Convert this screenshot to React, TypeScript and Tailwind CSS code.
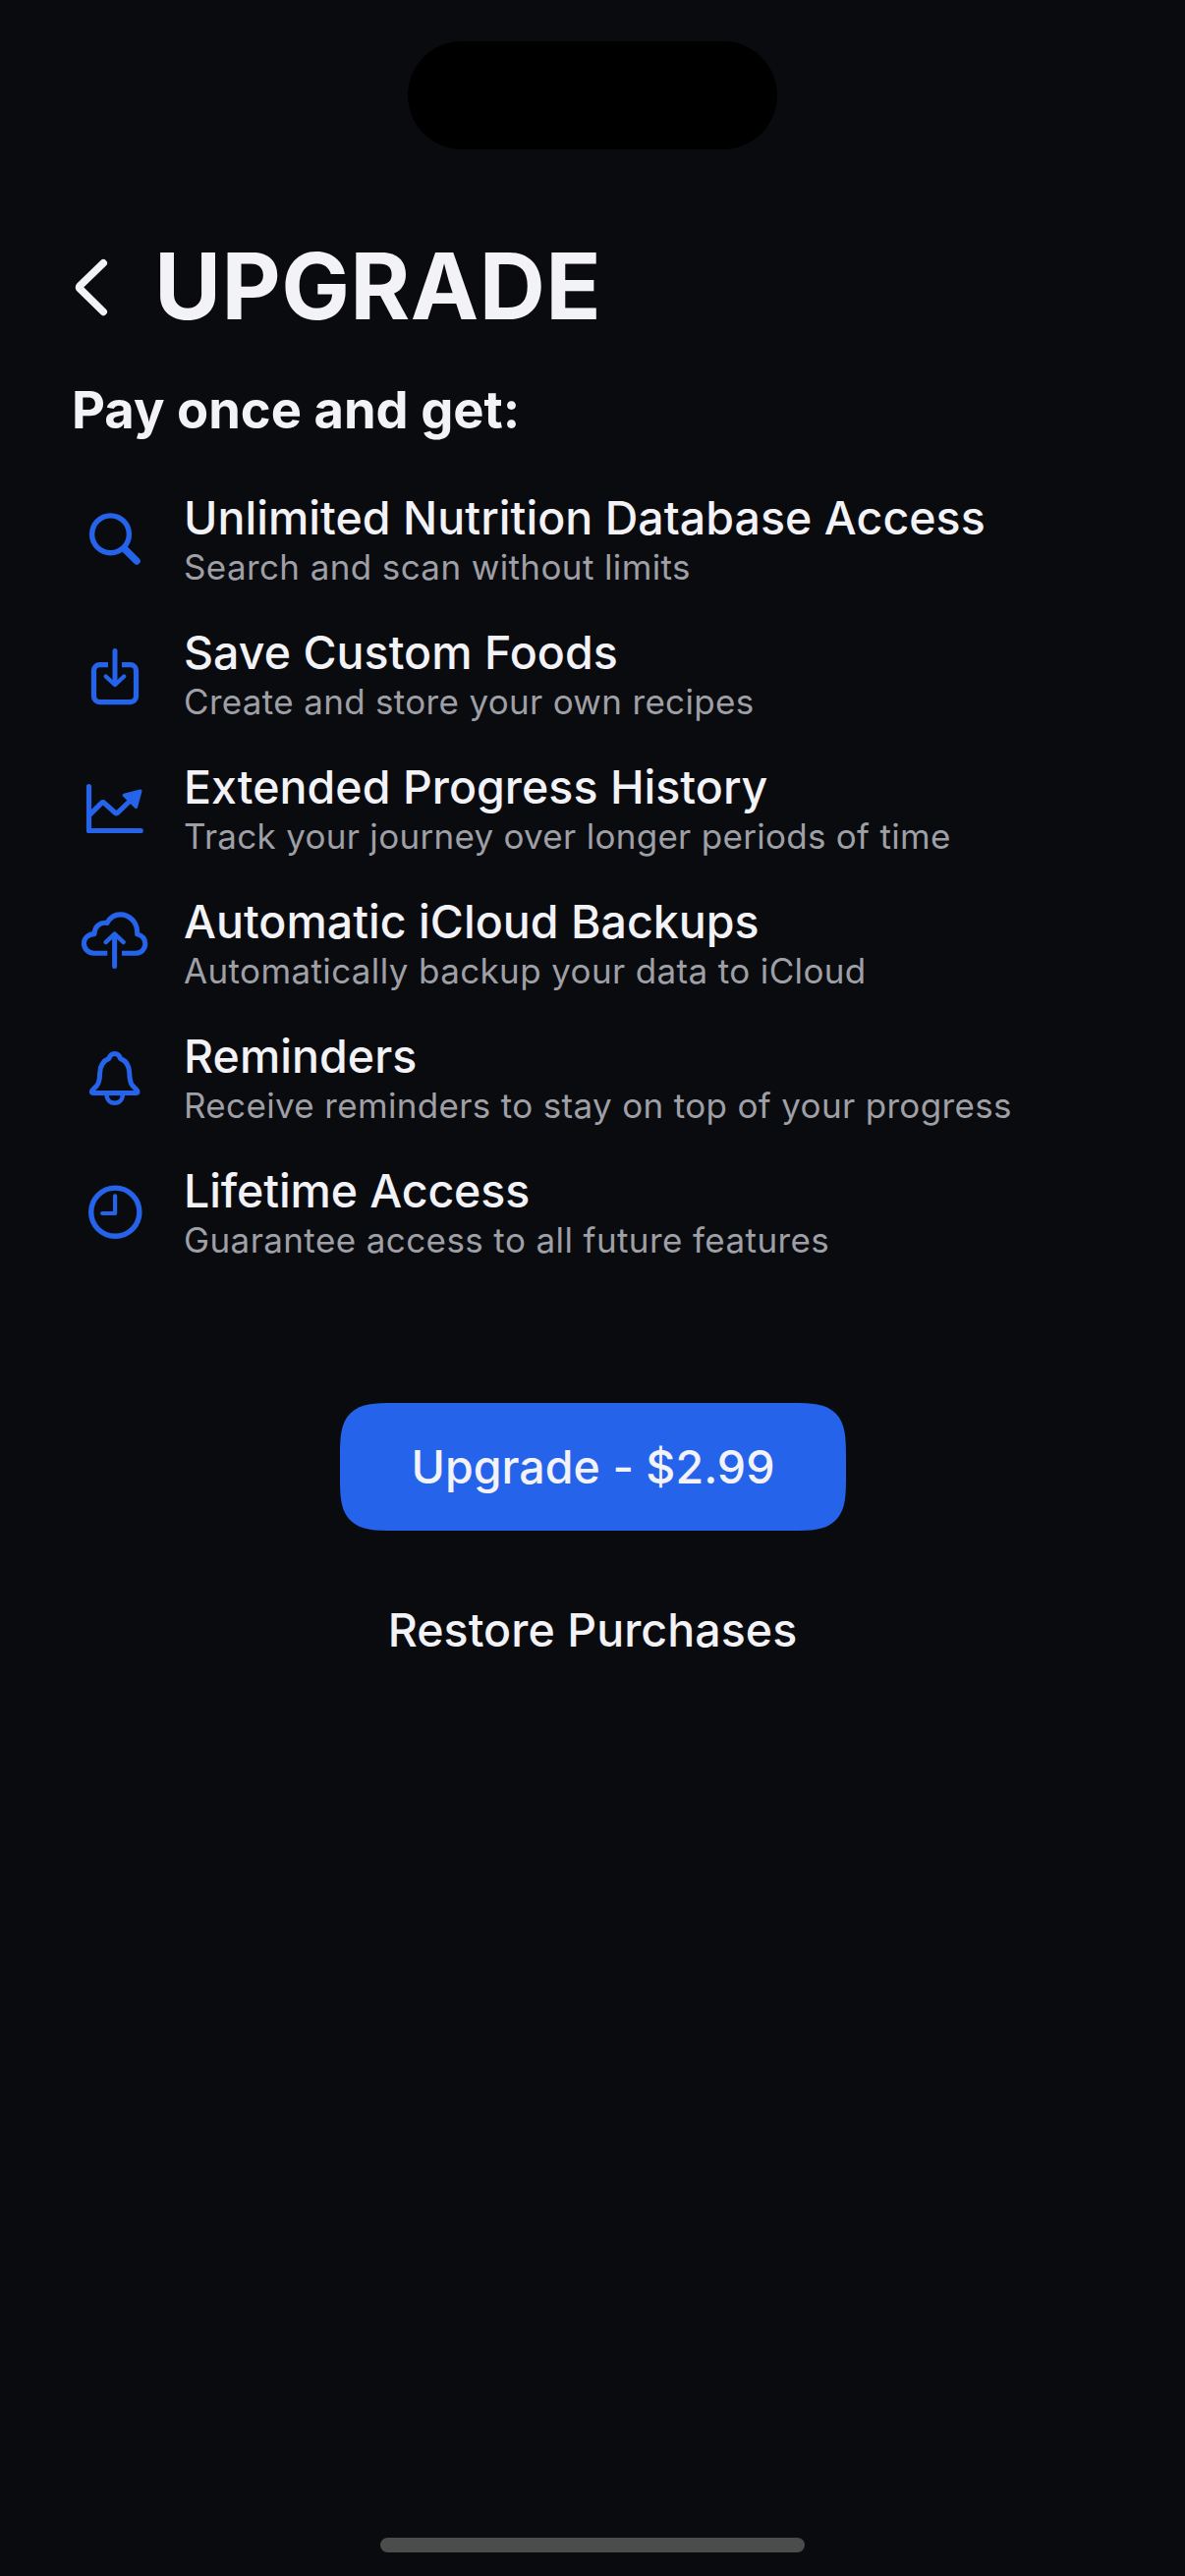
import type { ReactNode } from "react";

type Feature = {
  title: string;
  description: string;
  titleTracking: string;
  textTracking: string;
  icon: ReactNode;
};

const features: Feature[] = [
  {
    title: "Unlimited Nutrition Database Access",
    description: "Search and scan without limits",
    titleTracking: "tracking-[0.04px]",
    textTracking: "tracking-[0.38px]",
    icon: (
      <>
        <circle cx="36.5" cy="39.8" r="18.9" strokeWidth="5.4" />
        <path d="M51.2 55.1 63.1 67" strokeWidth="7.4" />
      </>
    ),
  },
  {
    title: "Save Custom Foods",
    description: "Create and store your own recipes",
    titleTracking: "tracking-[0.03px]",
    textTracking: "tracking-[0.32px]",
    icon: (
      <>
        <path
          d="M34 35.6H25.3A5.8 5.8 0 0 0 19.5 41.4V67.8A5.8 5.8 0 0 0 25.3 73.6H56.7A5.8 5.8 0 0 0 62.5 67.8V41.4A5.8 5.8 0 0 0 56.7 35.6H48"
          strokeWidth="5.2"
          strokeLinecap="butt"
        />
        <path d="M41 21.4V55" strokeWidth="5" />
        <path d="M31.7 47.5 41 56 50.2 47.5" strokeWidth="4.4" />
      </>
    ),
  },
  {
    title: "Extended Progress History",
    description: "Track your journey over longer periods of time",
    titleTracking: "tracking-[0.03px]",
    textTracking: "tracking-[0.29px]",
    icon: (
      <>
        <path d="M14.5 22.6V67.5H67.2" strokeWidth="5.2" />
        <path d="M15.5 51.1 27.3 39.4Q28.7 38 30.1 39.4L41.2 49.2Q42.6 50.4 44 49L58 35.5" strokeWidth="5.2" />
        <path d="M66.8 27.2 50.3 31.3 62.4 43.4Z" fill="currentColor" strokeWidth="3.4" />
      </>
    ),
  },
  {
    title: "Automatic iCloud Backups",
    description: "Automatically backup your data to iCloud",
    titleTracking: "tracking-[0.02px]",
    textTracking: "tracking-[0.37px]",
    icon: (
      <>
        <path
          d="M33.3 55.3H19.8C13.8 55.3 9.5 51 9.5 45.4 9.5 40 13.6 36 20 35.6 20.3 27.9 25.8 23.3 33 24.4 36.1 18.9 40.8 15.9 46.3 15.9 55.8 15.9 63.3 23.5 63.6 33.2V35.9C68.8 37.3 71.8 41 71.8 45.6 71.8 51.3 67.6 55.3 61.6 55.3H48"
          strokeWidth="5.1"
          strokeLinecap="butt"
        />
        <path d="M40.6 36.5V68.5" strokeWidth="5" />
        <path d="M31.6 44.1 40.6 35.6 49.7 44.1" strokeWidth="4.4" />
      </>
    ),
  },
  {
    title: "Reminders",
    description: "Receive reminders to stay on top of your progress",
    titleTracking: "tracking-[0.05px]",
    textTracking: "tracking-[0.34px]",
    icon: (
      <>
        <path
          d="M40.7 20.4C37.7 20.4 35.9 22 35 25.4 28.9 27.8 25.7 33 25.6 40.5 25.6 47.5 25 50.3 22.3 53.3L18.2 57.5C16.5 59.3 17.2 60.6 19 60.6H62.4C64.2 60.6 64.9 59.3 63.2 57.5L59.1 53.3C56.4 50.3 55.8 47.5 55.8 40.5 55.7 33 52.5 27.8 46.4 25.4 45.5 22 43.7 20.4 40.7 20.4Z"
          strokeWidth="5"
        />
        <path d="M32.5 61.5C32.5 67.3 36 70.8 40.7 70.8S48.9 67.3 48.9 61.5" strokeWidth="4.5" />
      </>
    ),
  },
  {
    title: "Lifetime Access",
    description: "Guarantee access to all future features",
    titleTracking: "tracking-[-0.12px]",
    textTracking: "tracking-[0.4px]",
    icon: (
      <>
        <circle cx="41.3" cy="44.7" r="24.6" strokeWidth="5.4" />
        <path d="M41.1 28.4V46H28.1" strokeWidth="4.2" />
      </>
    ),
  },
];

function FeatureRow({ feature }: { feature: Feature }) {
  return (
    <li className="flex gap-[31px]">
      <svg
        viewBox="-4 -4 84 100"
        className="h-[100px] w-[84px] shrink-0 text-[#2563eb]"
        fill="none"
        stroke="currentColor"
        strokeLinecap="round"
        strokeLinejoin="round"
        aria-hidden="true"
      >
        {feature.icon}
      </svg>
      <div className="whitespace-nowrap">
        <h3 className={`text-[46.5px] leading-[54px] font-medium ${feature.titleTracking}`}>
          {feature.title}
        </h3>
        <p className={`text-[35px] leading-[46px] text-[#9f9fa6] ${feature.textTracking}`}>
          {feature.description}
        </p>
      </div>
    </li>
  );
}

export default function App() {
  return (
    <div className="flex h-[2622px] w-[1206px] flex-col overflow-hidden bg-[#090b0f] font-['Inter',sans-serif] text-[#f2f2f7]">
      <div className="mt-[42px] h-[110px] w-[376px] self-center rounded-full bg-black" />

      <main className="mt-[89px] flex flex-1 flex-col px-[72px]">
        <header className="flex">
          <button aria-label="Back" className="h-[100px] w-[85px]">
            <svg viewBox="0 0 84 100" className="h-[100px] w-[84px]" fill="none" stroke="currentColor" strokeWidth="7.6" strokeLinecap="round" strokeLinejoin="round">
              <path d="M33.2 26.8 9.2 50Q7.8 51.4 9.2 52.8L33.2 76.4" />
            </svg>
          </button>
          <h1 className="text-[93px] leading-[100px] font-bold tracking-[0.4px]">UPGRADE</h1>
        </header>

        <h2 className="mt-[46px] ml-px text-[52.5px] leading-[60px] font-bold">Pay once and get:</h2>

        <ul className="mt-[53px] flex flex-col gap-[37px]">
          {features.map((feature) => (
            <FeatureRow key={feature.title} feature={feature} />
          ))}
        </ul>

        <div className="mt-[143px] flex flex-col items-center gap-9">
          <button className="h-[130px] w-[515px] rounded-[38px] bg-[#2563eb] pt-0.5 pl-px text-[46.5px] font-medium tracking-[0.04px] supports-[corner-shape:squircle]:rounded-[55px] supports-[corner-shape:squircle]:[corner-shape:superellipse(1.7)]">
            Upgrade - $2.99
          </button>
          <button className="h-[130px] w-[515px] pt-0.5 text-[46.5px] font-medium tracking-[0.06px]">
            Restore Purchases
          </button>
        </div>
      </main>

      <div className="mb-6 h-[15px] w-[432px] self-center rounded-full bg-[#4c4c4c]" />
    </div>
  );
}
